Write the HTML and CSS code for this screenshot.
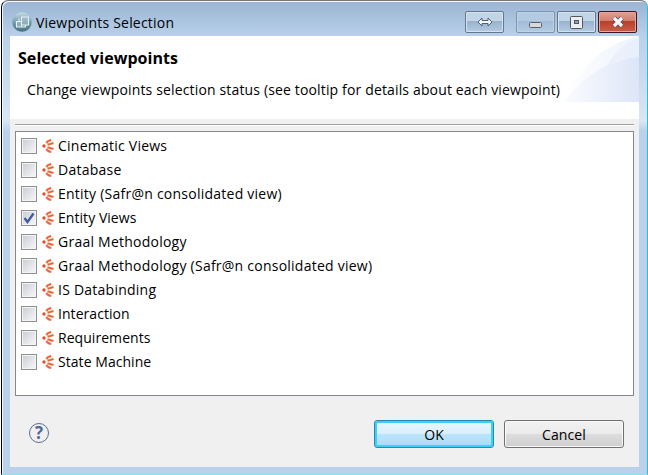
FILE: index.html
```html
<!DOCTYPE html>
<html lang="en">
<head>
<meta charset="utf-8">
<title>Viewpoints Selection</title>
<link rel="stylesheet" href="styles.css">
</head>
<body>
<svg class="defs" width="0" height="0" aria-hidden="true">
  <symbol id="viewpoint" viewBox="0 0 12 14">
    <circle cx="2" cy="7" r="1.7" fill="#e2502c"/>
    <path d="M4.500 4.300Q5 2 9.200 1M5.500 5.700 11.500 3.900M5.500 8.300 11.500 10.100M4.500 9.700Q5 12 9.200 13" fill="none" stroke="#f0683a" stroke-width="2.100"/>
  </symbol>
</svg>
<main class="window">
  <header class="titlebar">
    <svg class="app-icon" viewBox="0 0 20 20">
      <defs><linearGradient id="orb" x2="0" y2="1"><stop stop-color="#c5dce5"/><stop offset=".5" stop-color="#799eae"/><stop offset="1" stop-color="#42717e"/></linearGradient></defs>
      <circle cx="10" cy="10" r="9.800" fill="url(#orb)"/>
      <path d="M9.500 5h7v8h-7zM4.500 9.500h5V15h-5zM7 6.500v3M9.500 15h4v-2" fill="#a5c0cb" fill-opacity=".6" stroke="#e5f0f4" stroke-width="1.100"/>
    </svg>
    <span class="caption">Viewpoints Selection</span>
    <button class="control resize" aria-label="Resize"><svg width="16" height="10" viewBox="0 0 16 10"><path d="M1 5 5 1v2.500h6V1l4 4-4 4V6.500H5V9z" fill="#f3f6fa" stroke="#55606e"/></svg></button>
    <button class="control minimize" aria-label="Minimize"><svg width="13" height="13" viewBox="0 0 13 13"><rect x=".5" y="6.500" width="12" height="5" rx="1" fill="#d9d9d9" stroke="#566170"/></svg></button>
    <button class="control" aria-label="Maximize"><svg width="13" height="13" viewBox="0 0 13 13"><rect x=".5" y=".5" width="12" height="12" rx="1" fill="#eee" stroke="#505865"/><rect x="4.500" y="4.500" width="4" height="3" fill="#86a4c5" stroke="#505865"/></svg></button>
    <button class="control close" aria-label="Close"><svg width="14" height="12" viewBox="0 0 14 12"><path d="m3 2 8 8m0-8-8 8" fill="none" stroke="#59545e" stroke-width="5"/><path d="m3 2 8 8m0-8-8 8" fill="none" stroke="#f5f5f5" stroke-width="3.200"/></svg></button>
  </header>
  <section class="client">
    <div class="banner">
      <svg class="swoosh" width="75" height="66" viewBox="0 0 75 66">
        <defs>
          <linearGradient id="outer" x2="1" y2="0"><stop stop-color="#fff"/><stop offset="1" stop-color="#edf2fc"/></linearGradient>
          <linearGradient id="inner" x2="1" y2="0"><stop stop-color="#fbfcff"/><stop offset="1" stop-color="#dde5f7"/></linearGradient>
        </defs>
        <path d="M0 66C14 31 40 8 75 0v66z" fill="url(#outer)"/>
        <path d="M38 40C45 22 58 7 75 2v36z" fill="#e5ebf9" opacity=".55"/>
        <path d="M0 66C16 42 42 25 75 21v45z" fill="url(#inner)"/>
      </svg>
      <h1>Selected viewpoints</h1>
      <p>Change viewpoints selection status (see tooltip for details about each viewpoint)</p>
    </div>
    <div class="separator"></div>
    <ul class="list">
      <li><i class="check"></i><svg class="mark"><use href="#viewpoint"/></svg><span>Cinematic Views</span></li>
      <li><i class="check"></i><svg class="mark"><use href="#viewpoint"/></svg><span>Database</span></li>
      <li><i class="check"></i><svg class="mark"><use href="#viewpoint"/></svg><span>Entity (Safr@n consolidated view)</span></li>
      <li><i class="check"><svg width="12" height="12" viewBox="0 0 12 12"><path d="M1.500 6 4.500 10 10.500 1.500" fill="none" stroke="#3f5a9f" stroke-width="2.300"/></svg></i><svg class="mark"><use href="#viewpoint"/></svg><span class="snug">Entity Views</span></li>
      <li><i class="check"></i><svg class="mark"><use href="#viewpoint"/></svg><span>Graal Methodology</span></li>
      <li><i class="check"></i><svg class="mark"><use href="#viewpoint"/></svg><span>Graal Methodology (Safr@n consolidated view)</span></li>
      <li><i class="check"></i><svg class="mark"><use href="#viewpoint"/></svg><span>IS Databinding</span></li>
      <li><i class="check"></i><svg class="mark"><use href="#viewpoint"/></svg><span class="snug">Interaction</span></li>
      <li><i class="check"></i><svg class="mark"><use href="#viewpoint"/></svg><span class="snug">Requirements</span></li>
      <li><i class="check"></i><svg class="mark"><use href="#viewpoint"/></svg><span class="snug">State Machine</span></li>
    </ul>
    <footer class="actions">
      <span class="help">?</span>
      <button class="button default">OK</button>
      <button class="button">Cancel</button>
    </footer>
  </section>
</main>
</body>
</html>
```

FILE: styles.css
```css
* { box-sizing: border-box; }
body {
  margin: 0;
  width: 648px;
  height: 475px;
  overflow: hidden;
  background: #fff;
  color: #000;
  font: 14px/20px "Open Sans", "Noto Sans", sans-serif;
}
.defs { position: absolute; }
.window {
  width: 647px;
  height: 475px;
  margin-left: 1px;
  padding: 0 7px 6px 7px;
  border: 1px solid #000;
  border-top-color: #777;
  border-right-color: #1bc5d8;
  border-bottom-color: #8de0ee;
  border-radius: 7px 7px 0 0;
  box-shadow: inset 1px 1px #f4f8fc;
  background: linear-gradient(#9ab4d2, #b9d1ea 36px, #d9e6f4 120px, #b9d1ea 130px);
}
.titlebar { height: 35px; display: flex; align-items: flex-start; padding: 10px 3px 0 3px; }
.app-icon { width: 20px; height: 20px; margin: 1px 4px 0 0; }
.caption { flex: 1; line-height: 24px; letter-spacing: .2px; }
.control {
  width: 39px;
  height: 22px;
  margin-left: 2px;
  padding: 0;
  display: grid;
  place-items: center;
  border: 1px solid #65778f;
  border-radius: 2px;
  background: linear-gradient(#c2d4e8 0 45%, #98b1cd 46%, #b4cbe3);
  box-shadow: inset 0 0 0 1px #d5e3f1;
}
.minimize { margin-left: 12px; border-color: #7d93b2; background: linear-gradient(#b4cae2 0 45%, #a2bbd7 46%, #b4cbe3); box-shadow: inset 0 0 0 1px #c0d3e7; }
.close { border-color: #431422; background: linear-gradient(#e3a093, #d17e6e 45%, #b8402a 46%, #c95f45); box-shadow: inset 0 0 0 1px #e5a79d; }
.client { width: 629px; height: 431px; margin-left: 1px; background: #f0f0f0; display: flex; flex-direction: column; }
.banner { position: relative; height: 83px; padding: 12px 8px; background: #fff; }
.swoosh { position: absolute; top: 0; right: 0; }
h1, p { position: relative; margin: 0; white-space: nowrap; }
h1 { font-size: 16px; line-height: 20px; letter-spacing: .06px; }
p { margin: 12px 0 0 9px; letter-spacing: .15px; }
.separator { height: 2px; margin: 5px 5px 5px; border-top: 1px solid #a0a0a0; border-bottom: 1px solid #fff; }
.list { height: 265px; margin: 0 5px; padding: 2px 5px; list-style: none; background: #fff; border: 1px solid #828790; letter-spacing: .24px; }
.list li { display: flex; height: 24px; align-items: center; white-space: nowrap; }
.snug { letter-spacing: .05px; }
.check { width: 16px; height: 16px; display: grid; place-items: center; border: 1px solid #8e8f8f; box-shadow: inset 0 0 0 1px #f4f4f4; background: linear-gradient(135deg, #cbcfd5, #f6f6f6) content-box; padding: 1px; }
.mark { width: 12px; height: 14px; margin: 0 4px 0 5px; }
.actions { display: flex; padding: 24px 15px 0 19px; }
.help { width: 20px; height: 20px; margin: 3px auto 0 0; border: 1px solid #596f91; border-radius: 50%; color: #506890; font-weight: 700; font-size: 17px; line-height: 18px; text-align: center; }
.button { width: 120px; height: 28px; margin-left: 10px; padding: 0; border: 1px solid #707070; border-radius: 3px; box-shadow: inset 0 0 0 1px #fafafa; background: linear-gradient(#f2f2f2, #ebebeb 48%, #ddd 49%, #cfcfcf); font: inherit; line-height: 28px; letter-spacing: .1px; }
.default { border-color: #2d87ad; box-shadow: inset 0 0 0 2px #3bd0fa; background: linear-gradient(#eaf6fd, #d9f0fc 48%, #bee6fd 49%, #a7d9f5); }
```
